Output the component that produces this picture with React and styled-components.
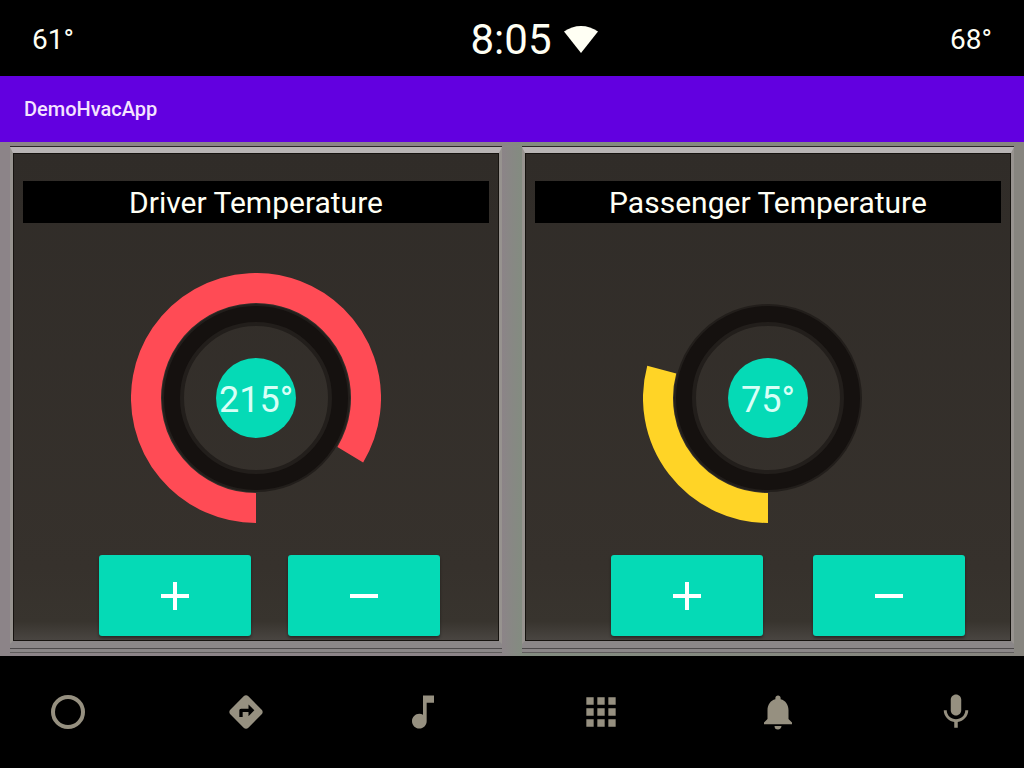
import React, { useState } from "react";
import styled, { createGlobalStyle } from "styled-components";
import {
  MdDirections,
  MdMusicNote,
  MdApps,
  MdNotifications,
  MdMic,
} from "react-icons/md";

const GlobalStyle = createGlobalStyle`
  * { box-sizing: border-box; }
  body {
    margin: 0;
    background: #000;
    font-family: Roboto, "Liberation Sans", sans-serif;
  }
`;

const Screen = styled.div`
  display: flex;
  flex-direction: column;
  min-height: 100vh;
`;

const StatusBar = styled.header`
  display: grid;
  grid-template-columns: 1fr auto 1fr;
  align-items: center;
  height: 76px;
  padding: 4px 32px 0;
  background: #000;
  color: #fffff4;
`;

const OutsideTemp = styled.span`
  font-size: 28px;
  line-height: 32px;
  text-align: ${(p) => (p.$end ? "right" : "left")};
`;

const Clock = styled.div`
  display: flex;
  align-items: center;
  gap: 12px;
  padding-left: 44px;
  font-size: 42px;
  line-height: 48px;
`;

const AppBar = styled.div`
  display: flex;
  align-items: center;
  height: 66px;
  padding: 0 24px;
  background: #6200e0;
`;

const AppTitle = styled.h1`
  margin: 0;
  color: #f5e4ff;
  font-size: 20px;
  line-height: 24px;
  font-weight: 500;
`;

const Zones = styled.main`
  flex: 1;
  display: grid;
  grid-template-columns: 1fr 1fr;
  gap: 20px;
  padding: 5px 10px 12px;
  background: linear-gradient(90deg, #8c8488 49%, #838c80 51%, #87857f);
`;

const Panel = styled.section`
  display: flex;
  flex-direction: column;
  align-items: center;
  padding: 28px 10px 0;
  border: solid;
  border-width: 6px 3px 3px;
  border-color: #b8b4b4 #97938f #8b8788;
  background: linear-gradient(#302c28, #36312c 85%, #38342e 96%, #4a4642);
  box-shadow:
    inset 0 0 0 1px #16130f,
    0 -1px 0 #2c2628,
    0 4px 0 #8b8788,
    0 5px 0 #4c494a,
    0 8px 0 #8b8788,
    0 9px 0 #5f5c5c;
`;

const PanelTitle = styled.h2`
  align-self: stretch;
  margin: 0 0 50px;
  padding-top: 2px;
  background: #000;
  color: #fffff4;
  font-size: 30px;
  line-height: 40px;
  font-weight: 400;
  text-align: center;
`;

const Dial = styled.svg`
  display: block;
  width: 250px;
  height: 250px;
`;

const DialText = styled.text`
  fill: #d8fff6;
  font-size: 36px;
  text-anchor: middle;
`;

const Controls = styled.div`
  align-self: stretch;
  display: flex;
  gap: ${(p) => p.$gap}px;
  padding: 32px 0 0 76px;
`;

const StepButton = styled.button`
  display: flex;
  align-items: center;
  justify-content: center;
  width: 152px;
  height: 81px;
  padding: 0;
  border: 0;
  border-radius: 3px;
  background: #05dab6;
  color: #fff;
  box-shadow: 0 2px 3px #00000066;
  cursor: pointer;
`;

const NavBar = styled.nav`
  display: flex;
  align-items: center;
  justify-content: space-between;
  height: 112px;
  padding: 0 46px;
  background: #000;
`;

const NavButton = styled.button`
  display: flex;
  align-items: center;
  justify-content: center;
  width: 44px;
  height: 44px;
  padding: 0;
  border: 0;
  background: none;
  color: #969080;
  cursor: pointer;
`;

const DEGREES_PER_STEP = 1.4;

// Sweeps clockwise from the bottom of the dial.
function arcPath(value, radius) {
  const sweep = value * DEGREES_PER_STEP;
  const angle = (sweep * Math.PI) / 180;
  const x = 125 - radius * Math.sin(angle);
  const y = 125 + radius * Math.cos(angle);
  return `M125 ${125 + radius} A${radius} ${radius} 0 ${sweep > 180 ? 1 : 0} 1 ${x} ${y}`;
}

function Zone({ name, initial, color, gap }) {
  const [value, setValue] = useState(initial);
  const step = (d) => setValue((v) => Math.min(255, Math.max(0, v + d)));
  return (
    <Panel>
      <PanelTitle>{name}</PanelTitle>
      <Dial viewBox="0 0 250 250">
        <circle cx="125" cy="125" r="83" fill="none" stroke="#221e1b" strokeWidth="22" />
        <circle cx="125" cy="125" r="84" fill="none" stroke="#15110f" strokeWidth="16" />
        <path d={arcPath(value, 110)} fill="none" stroke={color} strokeWidth="30" />
        <circle cx="125" cy="125" r="40" fill="#05dab6" />
        <DialText x="125" y="139">{value}°</DialText>
      </Dial>
      <Controls $gap={gap}>
        <StepButton aria-label={`Raise ${name}`} onClick={() => step(1)}>
          <svg width="28" height="28" viewBox="0 0 28 28" fill="currentColor">
            <path d="M12 0h4v12h12v4H16v12h-4V16H0v-4h12z" />
          </svg>
        </StepButton>
        <StepButton aria-label={`Lower ${name}`} onClick={() => step(-1)}>
          <svg width="28" height="28" viewBox="0 0 28 28" fill="currentColor">
            <path d="M0 12h28v4H0z" />
          </svg>
        </StepButton>
      </Controls>
    </Panel>
  );
}

export default function App() {
  return (
    <Screen>
      <GlobalStyle />
      <StatusBar>
        <OutsideTemp>61°</OutsideTemp>
        <Clock>
          <span>8:05</span>
          <svg width="34" height="28" viewBox="0 0 34 28" fill="currentColor" role="img" aria-label="Wi-Fi">
            <path d="M0 5.500C5 2 11 0 17 0s12 2 17 5.500L17 27z" />
          </svg>
        </Clock>
        <OutsideTemp $end>68°</OutsideTemp>
      </StatusBar>
      <AppBar>
        <AppTitle>DemoHvacApp</AppTitle>
      </AppBar>
      <Zones>
        <Zone name="Driver Temperature" initial={215} color="#ff4b55" gap={37} />
        <Zone name="Passenger Temperature" initial={75} color="#ffd426" gap={50} />
      </Zones>
      <NavBar>
        <NavButton aria-label="Home">
          <svg width="34" height="34" viewBox="0 0 34 34" fill="none" stroke="currentColor" strokeWidth="4">
            <circle cx="17" cy="17" r="15" />
          </svg>
        </NavButton>
        <NavButton aria-label="Navigation"><MdDirections size={40} /></NavButton>
        <NavButton aria-label="Music"><MdMusicNote size={44} /></NavButton>
        <NavButton aria-label="Apps"><MdApps size={46} /></NavButton>
        <NavButton aria-label="Notifications"><MdNotifications size={42} /></NavButton>
        <NavButton aria-label="Voice"><MdMic size={42} /></NavButton>
      </NavBar>
    </Screen>
  );
}
